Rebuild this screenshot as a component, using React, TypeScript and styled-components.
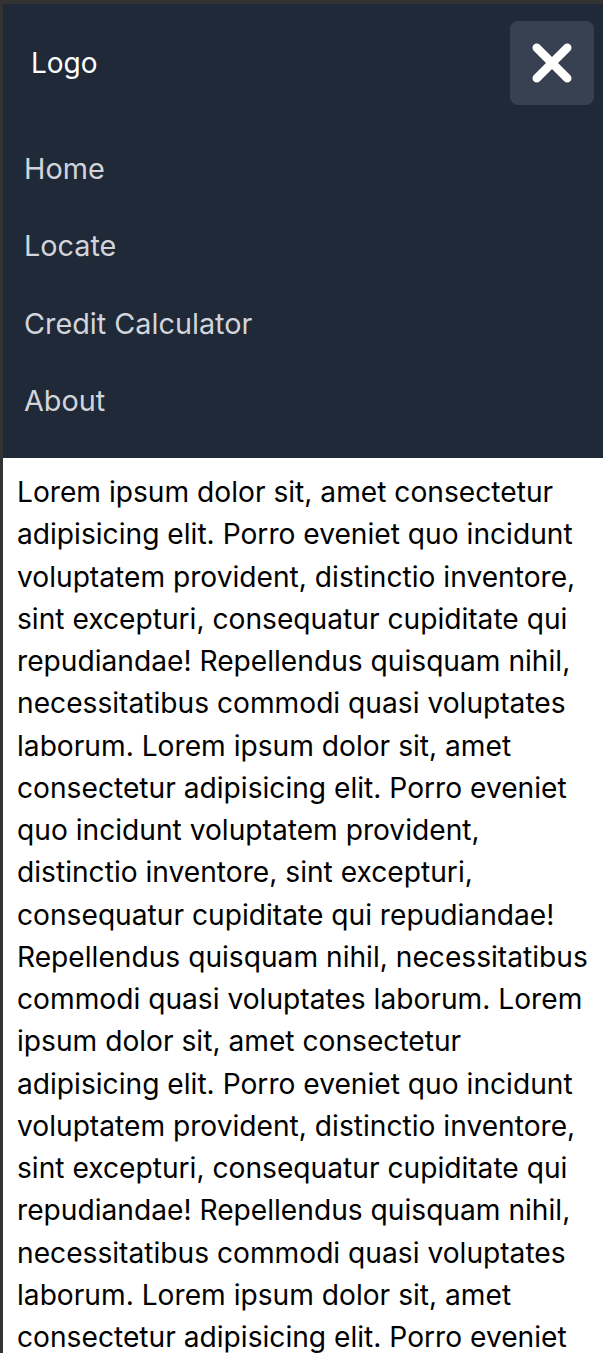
import React from "react";
import styled, { createGlobalStyle } from "styled-components";

const Global = createGlobalStyle`
  html, body { margin: 0; padding: 0; background: #ffffff; }
  body { font-family: Inter, "Noto Sans", sans-serif; }
  * { box-sizing: border-box; }
`;

const Frame = styled.div`
  border-top: 4px solid #333333;
  border-left: 3px solid #333333;
  height: 1353px;
  overflow: hidden;
`;

const Panel = styled.div`
  background: #1f2937;
  padding-bottom: 18.5px;
`;

const Header = styled.header`
  display: flex;
  align-items: center;
  justify-content: space-between;
  padding: 17px 9px 24px 28px;
`;

const Logo = styled.span`
  color: #ffffff;
  font-size: 28px;
  line-height: 32px;
  font-family: Inter, sans-serif;
`;

const CloseButton = styled.button`
  width: 84px;
  height: 84px;
  border: none;
  border-radius: 8px;
  background: #374151;
  display: flex;
  align-items: center;
  justify-content: center;
  padding: 0;
  cursor: pointer;
`;

const Nav = styled.nav`
  display: flex;
  flex-direction: column;
`;

const NavLink = styled.a`
  display: flex;
  align-items: center;
  height: 77.5px;
  padding-left: 21px;
  padding-top: 1px;
  color: #d1d5db;
  font-size: 28.8px;
  text-decoration: none;
`;

const Content = styled.p`
  margin: 0;
  padding: 13.5px 15px 0 14px;
  color: #000000;
  font-size: 28.16px;
  line-height: 42.25px;
`;

const para =
  "Lorem ipsum dolor sit, amet consectetur adipisicing elit. Porro eveniet quo incidunt voluptatem provident, distinctio inventore, sint excepturi, consequatur cupiditate qui repudiandae! Repellendus quisquam nihil, necessitatibus commodi quasi voluptates laborum.";

export default function App() {
  return (
    <>
      <Global />
      <Frame>
        <Panel>
          <Header>
            <Logo>Logo</Logo>
            <CloseButton aria-label="Close menu">
              <svg width="40" height="40" viewBox="0 0 40 40">
                <path
                  d="M4.75 4.75 L35.25 35.25 M35.25 4.75 L4.75 35.25"
                  stroke="#ffffff"
                  strokeWidth="8.5"
                  strokeLinecap="round"
                  fill="none"
                />
              </svg>
            </CloseButton>
          </Header>
          <Nav>
            {["Home", "Locate", "Credit Calculator", "About"].map((l) => (
              <NavLink key={l} href="#">
                {l}
              </NavLink>
            ))}
          </Nav>
        </Panel>
        <Content>{[para, para, para, para].join(" ")}</Content>
      </Frame>
    </>
  );
}
